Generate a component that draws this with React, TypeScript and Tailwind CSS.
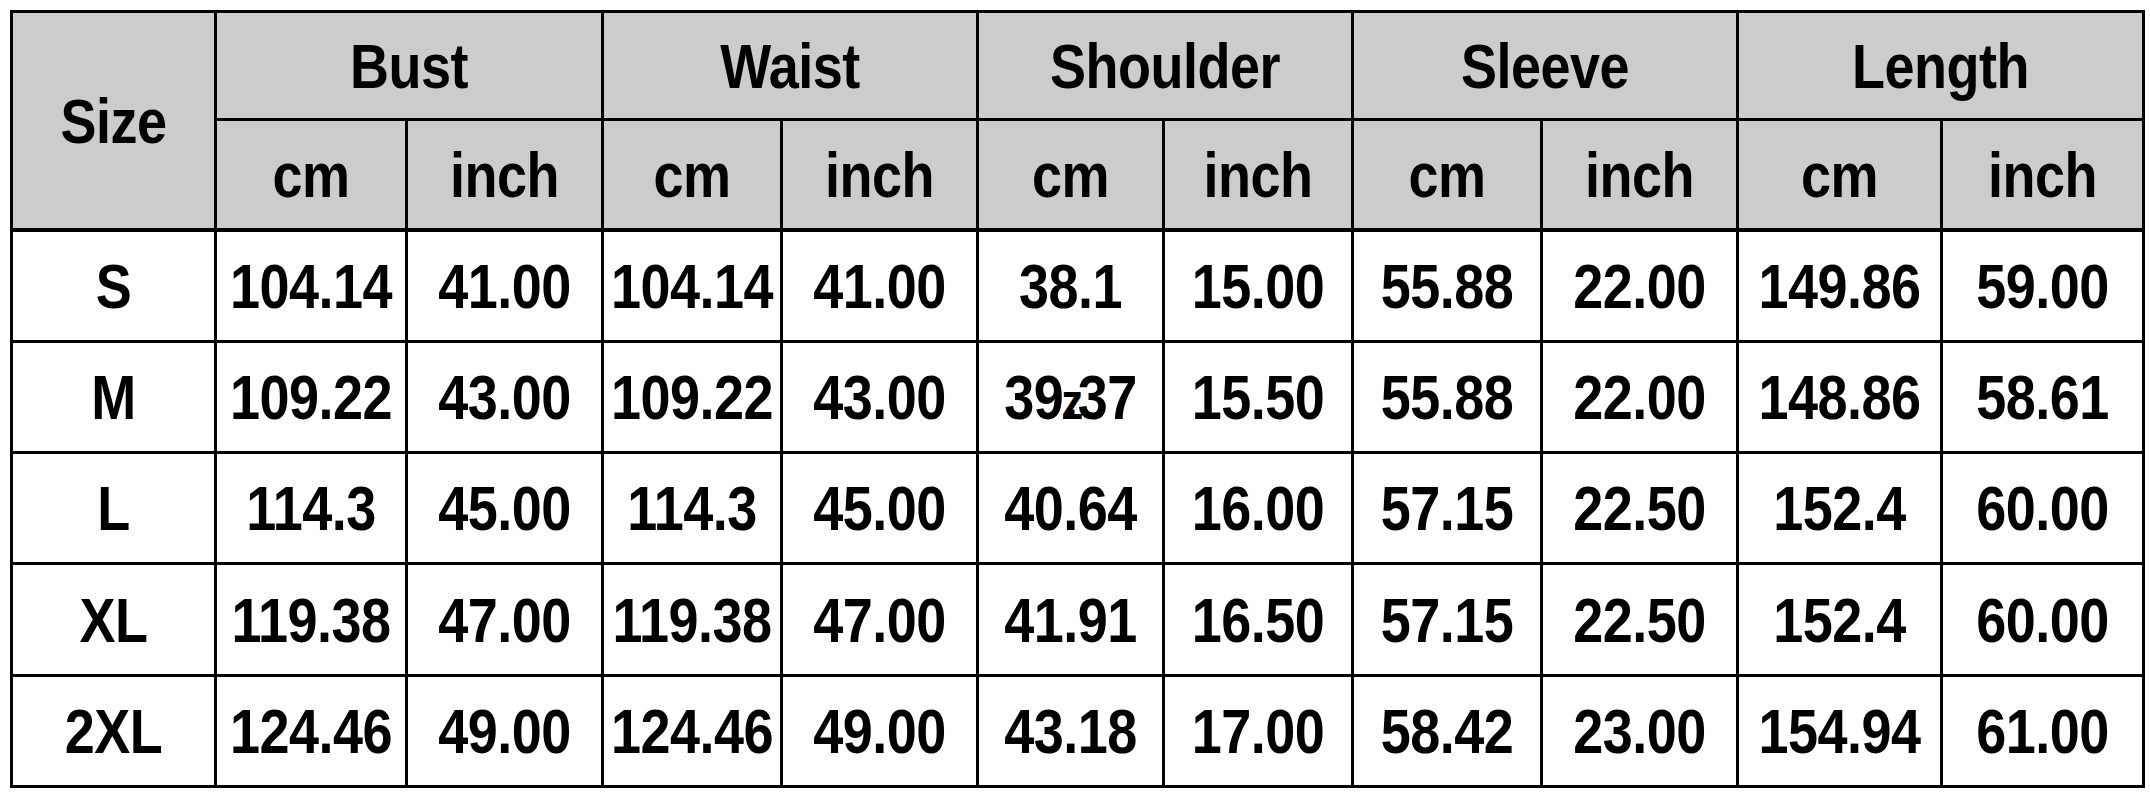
import React from "react";

const groups = ["Bust", "Waist", "Shoulder", "Sleeve", "Length"];

const rows: { size: string; values: string[] }[] = [
  { size: "S", values: ["104.14", "41.00", "104.14", "41.00", "38.1", "15.00", "55.88", "22.00", "149.86", "59.00"] },
  { size: "M", values: ["109.22", "43.00", "109.22", "43.00", "39.37", "15.50", "55.88", "22.00", "148.86", "58.61"] },
  { size: "L", values: ["114.3", "45.00", "114.3", "45.00", "40.64", "16.00", "57.15", "22.50", "152.4", "60.00"] },
  { size: "XL", values: ["119.38", "47.00", "119.38", "47.00", "41.91", "16.50", "57.15", "22.50", "152.4", "60.00"] },
  { size: "2XL", values: ["124.46", "49.00", "124.46", "49.00", "43.18", "17.00", "58.42", "23.00", "154.94", "61.00"] },
];

const cols = "grid grid-cols-[201px_188px_193px_176px_193px_183px_186px_186px_193px_201px_199px] gap-[3px]";
const head = "bg-[#cccccc] flex items-center justify-center";
const cell = "bg-white flex items-center justify-center";

const Txt: React.FC<{ children: React.ReactNode }> = ({ children }) => (
  <span className="relative inline-block scale-y-[1.15] tracking-[-0.5px]">{children}</span>
);

const Value: React.FC<{ v: string }> = ({ v }) => {
  // the reference has a stray "z" mark stamped over the dot in 39.37
  if (v === "39.37") {
    return (
      <Txt>
        39.37
        <span className="absolute left-[57px] top-[9px] text-[44px] font-bold leading-none">z</span>
      </Txt>
    );
  }
  return <Txt>{v}</Txt>;
};

export default function App() {
  return (
    <div className="w-[2150px] h-[800px] bg-white pt-[10px] pl-[10px]">
      <div
        className="grid w-fit bg-black gap-[3px] p-[3px] text-black font-bold text-[54px] leading-none"
        style={{ fontFamily: '"Liberation Sans", Arial, sans-serif' }}
      >
        <div className={`${cols} grid-rows-[105px_107px]`}>
          <div className={`${head} row-span-2`}>
            <Txt>Size</Txt>
          </div>
          {groups.map((g) => (
            <div key={g} className={`${head} col-span-2`}>
              <Txt>{g}</Txt>
            </div>
          ))}
          {groups.map((g) => (
            <React.Fragment key={g + "-u"}>
              <div className={head}>
                <Txt>cm</Txt>
              </div>
              <div className={head}>
                <Txt>inch</Txt>
              </div>
            </React.Fragment>
          ))}
        </div>
        <div className={`${cols} grid-rows-[108px_108px_108px_109px_108px] border-t border-black`}>
          {rows.map((r) => (
            <React.Fragment key={r.size}>
              <div className={cell}>
                <Txt>{r.size}</Txt>
              </div>
              {r.values.map((v, i) => (
                <div key={i} className={cell}>
                  <Value v={v} />
                </div>
              ))}
            </React.Fragment>
          ))}
        </div>
      </div>
    </div>
  );
}
